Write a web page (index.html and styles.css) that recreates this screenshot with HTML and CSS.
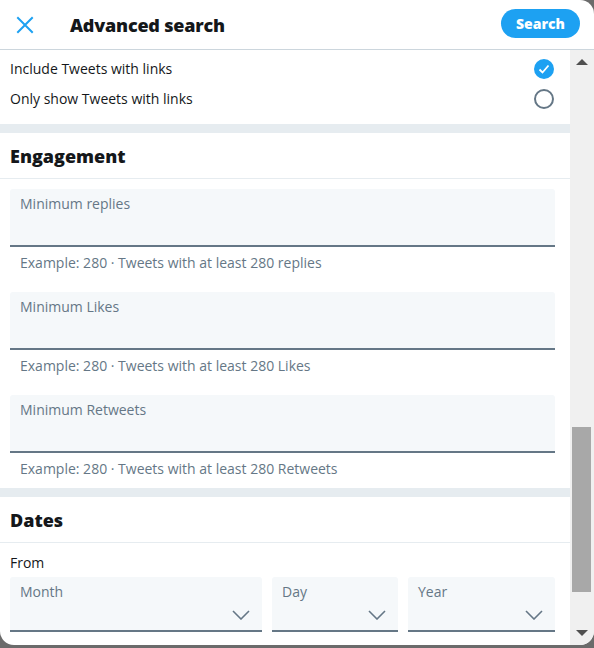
FILE: index.html
```html
<!DOCTYPE html>
<html>
<head>
<meta charset="utf-8">
<link rel="stylesheet" href="styles.css">
</head>
<body>
<div class="modal">
  <header class="top">
    <div class="close">
      <svg width="20" height="20" viewBox="0 0 20 20"><path d="M3 3 L17 17 M17 3 L3 17" stroke="#1da1f2" stroke-width="2" fill="none" stroke-linecap="square"/></svg>
    </div>
    <h1 class="title">Advanced search</h1>
    <button class="search">Search</button>
  </header>
  <div class="body">
    <div class="content">
      <div class="opt">
        <span>Include Tweets with links</span>
        <svg class="check" width="22" height="22" viewBox="0 0 22 22"><circle cx="11" cy="11" r="10" fill="#1da1f2"/><path d="M6.5 11.5 L9.5 14.5 L15.5 7.5" stroke="#fff" stroke-width="1.8" fill="none"/></svg>
      </div>
      <div class="opt">
        <span>Only show Tweets with links</span>
        <svg class="check" width="22" height="22" viewBox="0 0 22 22"><circle cx="11" cy="11" r="9" fill="none" stroke="#657786" stroke-width="2"/></svg>
      </div>
      <div class="band first"></div>
      <h2 class="sec">Engagement</h2>
      <div class="field">
        <div class="input"><span>Minimum replies</span></div>
        <div class="help">Example: 280 · Tweets with at least 280 replies</div>
      </div>
      <div class="field">
        <div class="input"><span>Minimum Likes</span></div>
        <div class="help">Example: 280 · Tweets with at least 280 Likes</div>
      </div>
      <div class="field">
        <div class="input"><span>Minimum Retweets</span></div>
        <div class="help">Example: 280 · Tweets with at least 280 Retweets</div>
      </div>
      <div class="band second"></div>
      <h2 class="sec">Dates</h2>
      <div class="from">From</div>
      <div class="selects">
        <div class="select month"><span>Month</span><svg class="chev" width="18" height="10" viewBox="0 0 18 10"><path d="M1 1 L9 9 L17 1" stroke="#657786" stroke-width="1.6" fill="none"/></svg></div>
        <div class="select day"><span>Day</span><svg class="chev" width="18" height="10" viewBox="0 0 18 10"><path d="M1 1 L9 9 L17 1" stroke="#657786" stroke-width="1.6" fill="none"/></svg></div>
        <div class="select year"><span>Year</span><svg class="chev" width="18" height="10" viewBox="0 0 18 10"><path d="M1 1 L9 9 L17 1" stroke="#657786" stroke-width="1.6" fill="none"/></svg></div>
      </div>
    </div>
    <div class="scrollbar">
      <div class="arrow up"></div>
      <div class="track"><div class="thumb"></div></div>
      <div class="arrow down"></div>
    </div>
  </div>
</div>
</body>
</html>
```

FILE: styles.css
```css
html, body {
  margin: 0;
  padding: 0;
}
body {
  width: 594px;
  height: 648px;
  background: #6b6b6b;
  font-family: "Open Sans", "Noto Sans", sans-serif;
  overflow: hidden;
}
.modal {
  width: 594px;
  height: 645px;
  background: #fff;
  border-radius: 0 14px 14px 14px;
  overflow: hidden;
  display: flex;
  flex-direction: column;
}
.top {
  height: 49px;
  border-bottom: 1px solid #ccd6dd;
  display: flex;
  align-items: center;
  padding: 0 14px 0 15px;
  flex-shrink: 0;
}
.close {
  width: 20px;
  height: 20px;
  display: flex;
}
.title {
  margin: 0 0 0 35px;
  font-size: 18px;
  font-weight: 800;
  color: #14171a;
  flex: 1;
  letter-spacing: -0.2px;
}
.search {
  background: #1da1f2;
  color: #fff;
  border: none;
  border-radius: 15px;
  height: 29px;
  width: 79px;
  font-family: inherit;
  font-weight: 800;
  font-size: 14px;
  padding: 0;
  margin-top: -2px;
}
.body {
  flex: 1;
  display: flex;
  min-height: 0;
}
.content {
  width: 570px;
  overflow: hidden;
}
.opt {
  height: 30px;
  display: flex;
  align-items: center;
  justify-content: space-between;
  padding: 0 15px 0 10px;
  font-size: 14px;
  color: #14171a;
}
.opt:first-child {
  margin-top: 4px;
}
.opt span {
  margin-top: -1px;
}
.band {
  height: 9px;
  background: #e6ecf0;
}
.band.first {
  margin-top: 10px;
}
.band.second {
  margin-top: 7px;
}
.sec {
  margin: 0;
  height: 45px;
  line-height: 47px;
  border-bottom: 1px solid #e6ecf0;
  padding-left: 10px;
  font-size: 18px;
  font-weight: 800;
  color: #14171a;
}
.field {
  padding: 10px 15px 0 10px;
}
.field + .field {
  padding-top: 17px;
}
.input {
  background: #f5f8fa;
  border-bottom: 2px solid #657786;
  border-radius: 3px 3px 0 0;
  padding: 5px 10px 0;
  box-sizing: border-box;
  height: 58px;
  font-size: 14px;
  color: #657786;
}
.help {
  padding: 4px 10px 0;
  font-size: 14px;
  line-height: 24px;
  color: #657786;
}
.from {
  padding: 9px 10px 0;
  font-size: 14px;
  line-height: 22px;
  color: #14171a;
}
.selects {
  display: flex;
  gap: 10px;
  padding: 3px 15px 0 10px;
}
.select {
  height: 55px;
  box-sizing: border-box;
  background: #f5f8fa;
  border-bottom: 2px solid #657786;
  border-radius: 3px 3px 0 0;
  padding: 5px 10px 0;
  font-size: 14px;
  color: #657786;
  position: relative;
}
.month { width: 252px; }
.day { width: 126px; }
.year { width: 147px; }
.chev {
  position: absolute;
  right: 12px;
  top: 33px;
}
.scrollbar {
  width: 24px;
  background: #f0f0f0;
  display: flex;
  flex-direction: column;
}
.arrow {
  height: 24px;
  display: flex;
  justify-content: center;
  align-items: center;
}
.arrow.up::before {
  content: "";
  border-left: 6px solid transparent;
  border-right: 6px solid transparent;
  border-bottom: 6px solid #505050;
}
.arrow.down {
  margin-top: auto;
}
.arrow.down::before {
  content: "";
  border-left: 6px solid transparent;
  border-right: 6px solid transparent;
  border-top: 6px solid #505050;
}
.track {
  flex: 1;
  display: flex;
  flex-direction: column;
  justify-content: flex-end;
  padding-bottom: 29px;
}
.thumb {
  height: 165px;
  margin: 0 3px 0 2px;
  background: #a8a8a8;
}
```
